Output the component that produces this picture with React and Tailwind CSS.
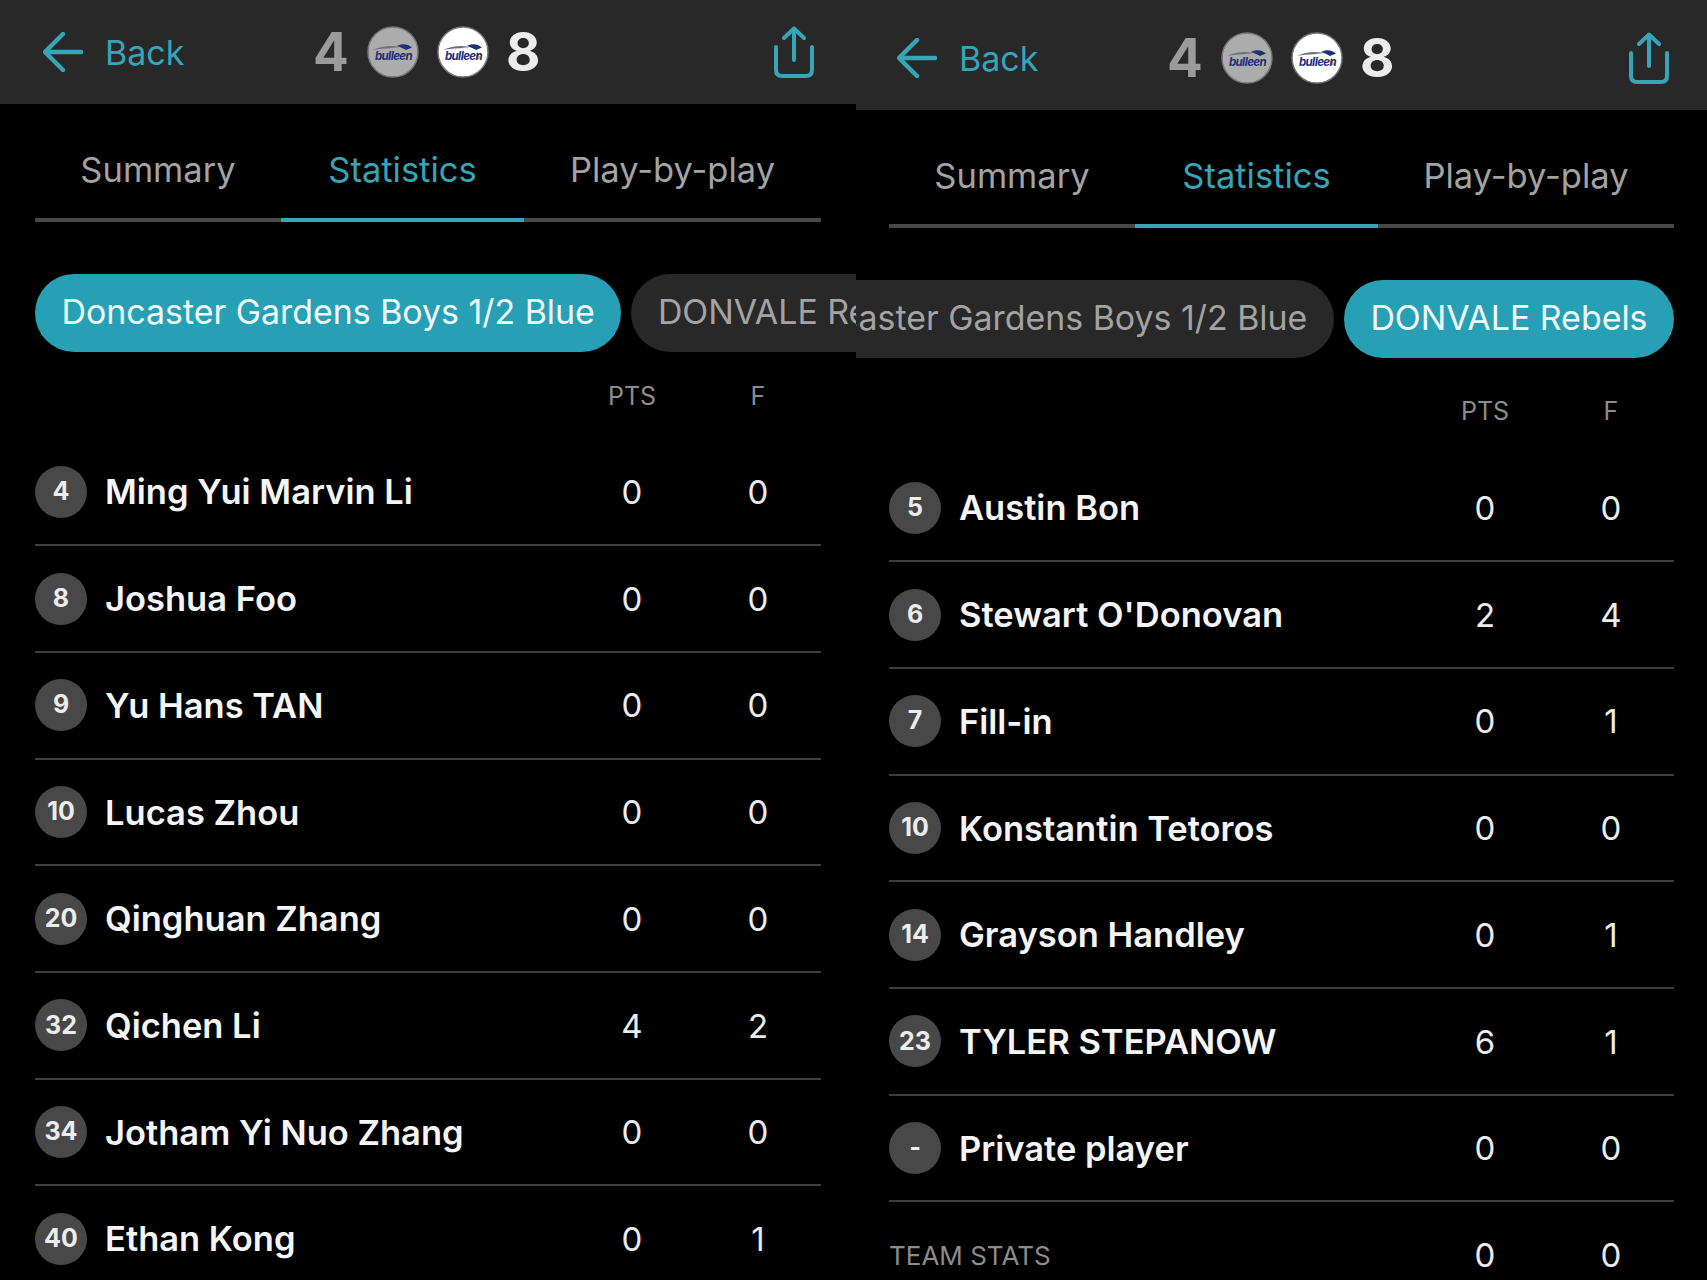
const F = { fontFamily: '"Inter", "Noto Sans", sans-serif' };

function Logo({ bg }) {
  return (
    <svg width="52" height="52" viewBox="0 0 52 52" className="shrink-0">
      <circle cx="26" cy="26" r="25" fill={bg} stroke="#777" strokeWidth="1.5" />
      <path d="M6 24 C14 20 24 19 33 21 C30 22 18 22 6 24 Z" fill="#6f747c" />
      <path d="M30 20 C35 17 41 18 45 21.5 L39 24 C36 22 33 21 30 20 Z" fill="#1f2f78" />
      <path d="M40 25 L44 33 L39.5 33 Z" fill="#d9b84a" />
      <text x="26.5" y="34" textAnchor="middle" fontFamily="Inter, sans-serif" fontStyle="italic" fontWeight="700" fontSize="11.5" fill="#1f2f78" letterSpacing="-0.6">bulleen</text>
    </svg>
  );
}

function Header({ h, pl, pr, pt }) {
  return (
    <div className="flex items-center bg-[#282828] shrink-0" style={{ height: h, paddingLeft: pl, paddingRight: pr, paddingTop: pt }}>
      <svg width="40" height="40" viewBox="0 0 40 40" fill="none" stroke="#37a5b8" strokeWidth="4.5" strokeLinecap="round" strokeLinejoin="round" className="shrink-0">
        <path d="M38 20 H3" />
        <path d="M20 2 L2 20 L20 38" />
      </svg>
      <span className="ml-[22px] w-[208px] text-[34px] text-[#37a5b8]">Back</span>
      <span className="w-[34px] text-[53px] leading-none font-bold text-[#9b9b9b]">4</span>
      <div className="ml-[20px]"><Logo bg="#acacac" /></div>
      <div className="ml-[18px]"><Logo bg="#ffffff" /></div>
      <span className="ml-[17px] w-[34px] text-[53px] leading-none font-bold text-[#ececec]">8</span>
      <svg width="42" height="52" viewBox="0 0 42 52" fill="none" stroke="#37a5b8" strokeWidth="4" strokeLinecap="round" strokeLinejoin="round" className="ml-auto shrink-0">
        <path d="M21 34 V3" />
        <path d="M11 12 L21 2.5 L31 12" />
        <path d="M3 21 V44 Q3 50 9 50 H33 Q39 50 39 44 V21" />
      </svg>
    </div>
  );
}

function Tabs() {
  const cls = "text-center h-[117.5px] pt-[46px] border-b-[4px] text-[34.5px] leading-[40px] whitespace-nowrap";
  const off = "border-[#484848] text-[#a3a3a3]";
  return (
    <div className="flex">
      <div className={`w-[246px] ${cls} ${off}`}>Summary</div>
      <div className={`w-[243px] ${cls} border-[#37a5b8] text-[#37a5b8]`}>Statistics</div>
      <div className={`flex-1 ${cls} ${off}`}>Play-by-play</div>
    </div>
  );
}

function Pill({ label, active }) {
  return (
    <div className={`shrink-0 h-[78px] rounded-full px-[26.5px] flex items-center text-[33.9px] whitespace-nowrap ${active ? "bg-[#27a0b5] text-[#f0fafa]" : "bg-[#282828] text-[#a3a3a3]"}`}>
      {label}
    </div>
  );
}

function Row({ num, name, pts, f }) {
  return (
    <div className="flex items-center h-[106.7px] border-b-2 border-[#3c3c3c]">
      <div className="w-[52px] h-[52px] rounded-full bg-[#484848] flex items-center justify-center text-[25px] font-bold text-[#ececec] shrink-0">{num}</div>
      <div className="ml-[18px] flex-1 pt-[1px] text-[34.5px] font-semibold text-[#f5f5f5] whitespace-nowrap">{name}</div>
      <div className="w-[126px] pt-[2px] text-center text-[33px] text-[#ececec]">{pts}</div>
      <div className="w-[126px] pt-[2px] text-center text-[33px] text-[#ececec]">{f}</div>
    </div>
  );
}

function Panel({ width, pl, pr, head, tableGap, headGap, pills, justify, rows, footer }) {
  return (
    <div className="h-[1280px] overflow-hidden shrink-0 flex flex-col" style={{ width }}>
      <Header {...head} />
      <div className="flex flex-col" style={{ paddingLeft: pl, paddingRight: pr }}>
        <Tabs />
        <div className={`flex gap-[10px] mt-[52px] ${justify}`}>
          {pills.map(([l, a]) => <Pill key={l} label={l} active={a} />)}
        </div>
        <div className="flex justify-end text-[25px] leading-[28px] text-[#8c8c8c]" style={{ marginTop: headGap }}>
          <div className="w-[126px] text-center">PTS</div>
          <div className="w-[126px] text-center">F</div>
        </div>
        <div className="flex flex-col" style={{ marginTop: tableGap }}>
          {rows.map((r) => <Row key={r[1]} num={r[0]} name={r[1]} pts={r[2]} f={r[3]} />)}
          {footer && (
            <div className="flex items-center h-[106px]">
              <div className="flex-1 text-[26px] text-[#8c8c8c]">TEAM STATS</div>
              <div className="w-[126px] text-center text-[33px] text-[#ececec]">0</div>
              <div className="w-[126px] text-center text-[33px] text-[#ececec]">0</div>
            </div>
          )}
        </div>
      </div>
    </div>
  );
}

const left = [
  ["4", "Ming Yui Marvin Li", 0, 0],
  ["8", "Joshua Foo", 0, 0],
  ["9", "Yu Hans TAN", 0, 0],
  ["10", "Lucas Zhou", 0, 0],
  ["20", "Qinghuan Zhang", 0, 0],
  ["32", "Qichen Li", 4, 2],
  ["34", "Jotham Yi Nuo Zhang", 0, 0],
  ["40", "Ethan Kong", 0, 1],
];
const right = [
  ["5", "Austin Bon", 0, 0],
  ["6", "Stewart O'Donovan", 2, 4],
  ["7", "Fill-in", 0, 1],
  ["10", "Konstantin Tetoros", 0, 0],
  ["14", "Grayson Handley", 0, 1],
  ["23", "TYLER STEPANOW", 6, 1],
  ["-", "Private player", 0, 0],
];

export default function App() {
  return (
    <div className="flex w-[1707px] h-[1280px] overflow-hidden bg-black" style={F}>
      <Panel width={856} pl={35} pr={35} head={{ h: 104, pl: 43, pr: 41, pt: 0 }} headGap={30} tableGap={30}
        pills={[["Doncaster Gardens Boys 1/2 Blue", true], ["DONVALE Rebels", false]]} justify="justify-start" rows={left} />
      <Panel width={851} pl={33} pr={33} head={{ h: 110, pl: 41, pr: 37, pt: 6 }} headGap={39} tableGap={31}
        pills={[["Doncaster Gardens Boys 1/2 Blue", false], ["DONVALE Rebels", true]]} justify="justify-end" rows={right} footer />
    </div>
  );
}
